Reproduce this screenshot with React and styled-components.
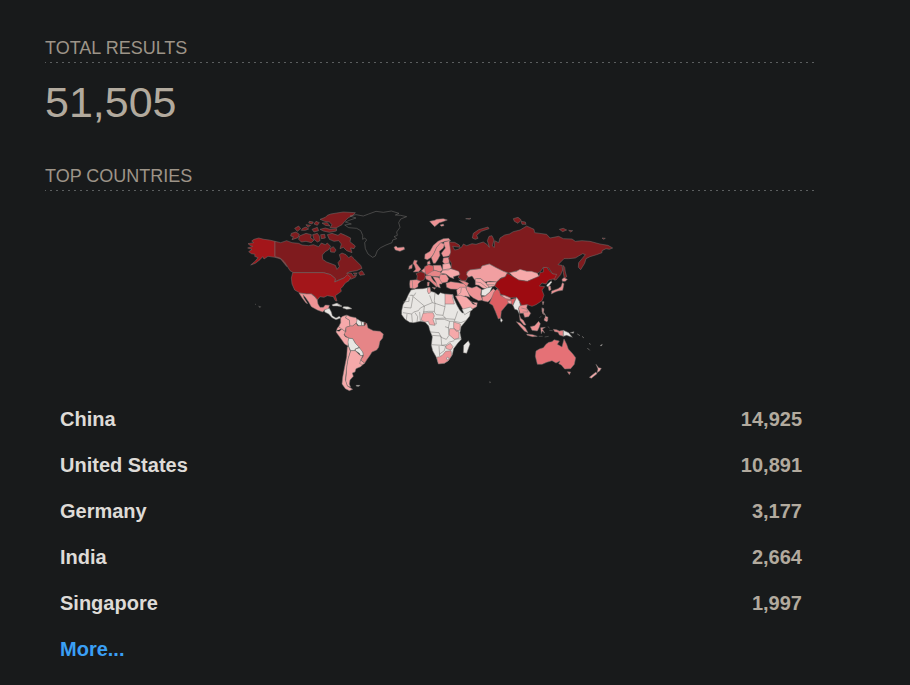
import React from 'react';
import styled, { createGlobalStyle } from 'styled-components';

const countries = [
    { name: 'China', total: '14,925' },
    { name: 'United States', total: '10,891' },
    { name: 'Germany', total: '3,177' },
    { name: 'India', total: '2,664' },
    { name: 'Singapore', total: '1,997' },
];

const none = '#e8e6e3';
const pale = '#f6a9aa';
const light = '#ee9395';
const mid = '#e68587';
const strong = '#dc5e62';
const dark = '#7f1b1e';

// every region has its own origin on the map, shapes are [fill, path]
const regions = [
    {
        name: 'north america',
        x: 0,
        y: 0,
        shapes: [
            ['#a3161a', 'M105 112L88 108 72 106 56 102 42 106 35 111 41 116 24 119 30 124 38 127 23 132 36 136 26 143 34 149 45 151 44 157 54 161 46 171 32 183 46 178 60 167 68 158 72 165 84 157 105 160 122 165 134 180 141 188 132 172 120 162 105 157Z'],
            [dark, 'M105 112L122 116 140 110 156 116 176 118 186 123 206 125 220 122 236 128 244 117 256 122 262 117 272 127 266 137 256 143 247 153 248 166 260 174 276 180 286 184 291 196 298 188 294 176 302 166 298 152 306 147 318 152 326 161 334 156 342 164 352 174 362 184 366 193 350 200 330 203 320 208 334 207 340 216 350 212 346 220 332 226 326 218 312 222 296 228 284 234 286 224 272 212 250 206 160 206 150 200 140 184 132 172 120 162 105 158Z'],
            [dark, 'M356 206L366 200 374 212 360 214Z M352 207L344 212 340 207Z'],
            ['#a3161a', 'M158 206L250 206 272 212 286 224 284 234 298 228 312 222 322 212 332 220 327 230 316 237 308 248 302 254 304 262 296 268 286 275 291 291 286 290 280 278 262 275 252 280 240 278 232 288 224 276 214 270 200 270 180 267 164 258 156 240 154 222Z'],
            [light, 'M177 267L200 270 214 270 224 278 232 288 234 300 240 310 250 310 256 303 268 304 265 316 254 318 248 324 232 318 214 308 206 294 196 280 189 272 192 282 203 299 198 297 186 281Z'],
            [dark, 'M240 46L256 40 262 34 272 30 290 27 310 24 346 26 340 33 324 42 314 52 306 62 288 72 270 71 276 62 268 54 254 52Z'],
            [dark, 'M240 76L256 72 270 76 290 74 289 81 268 85 250 81Z M246 57L262 56 270 66 256 64Z'],
            [dark, 'M178 96L198 88 214 92 212 102 222 108 214 116 198 112 184 114 176 106Z'],
            [dark, 'M154 88L168 84 178 91 174 101 156 107 160 98 152 96Z'],
            [dark, 'M164 73L176 66 182 74 172 82Z M188 73L198 69 206 75 196 79 184 79Z M208 52L220 54 216 60 206 57Z M198 62L212 64 204 70Z M216 76L232 70 236 80 222 84Z'],
            [dark, 'M218 92L232 88 238 96 240 110 232 114 222 106Z M242 92L254 91 256 102 244 104Z M228 52L238 56 232 64 222 60Z'],
            [dark, 'M262 92L276 88 294 94 302 88 316 94 332 102 330 113 346 126 342 134 332 132 336 146 320 140 310 130 300 134 304 120 296 110 282 112 268 106Z'],
            [dark, 'M270 134L280 128 288 138 284 145 272 144Z'],
            ['none', 'M45 300L48 302 M56 307L62 308 60 311Z'],
            [none, 'M279 302L292 298 306 306 290 305Z M312 308L328 310 334 314 318 315Z'],
        ],
    },
    {
        name: 'greenland and iceland',
        x: 270,
        y: 0,
        shapes: [
            ['none', 'M60 36L78 32 100 36 116 30 138 22 160 25 184 21 207 28 196 33 212 34 230 38 212 45 206 56 210 70 200 84 202 94 192 98 200 104 188 108 186 116 168 123 152 131 142 140 136 156 128 160 114 150 106 134 104 116 110 108 104 102 98 106 98 94 92 80 80 73 56 71 44 63 64 60 46 54 60 48 78 42Z'],
            [light, 'M192 130L198 126 203 131 222 129 224 136 210 142 196 138Z'],
        ],
    },
    {
        name: 'south america',
        x: 240,
        y: 288,
        shapes: [
            [none, 'M14 29L28 25 34 36 37 47 48 54 58 49 62 54 48 59 36 53 26 42 14 36Z'],
            [none, 'M36 14L50 10 66 20 52 18 38 18Z M70 20L84 20 96 26 80 28 68 24Z'],
            [pale, 'M62 54L68 49 80 45 77 54 88 60 90 78 78 82 76 95 62 86 56 80 62 68Z'],
            [pale, 'M80 45L92 50 108 53 113 62 108 70 98 78 90 78 88 60 77 54Z'],
            [none, 'M112 57L124 65 125 77 116 77 109 69Z M124 65L132 66 132 77 125 77Z'],
            [dark, 'M132 66L139 70 133 77Z'],
            [mid, 'M90 78L98 78 108 70 114 78 134 77 140 69 144 84 160 92 180 94 190 102 188 114 180 124 176 142 170 150 156 156 150 166 140 180 134 190 122 180 130 168 128 156 120 150 118 142 106 130 98 116 86 114 76 108 72 100 78 94 78 82Z'],
            [pale, 'M56 80L64 86 76 95 72 104 76 110 86 114 86 126 84 138 74 132 64 118 54 104 48 96 52 84Z M48 92L58 94 66 86'],
            [none, 'M86 115L98 116 106 130 118 142 106 147 104 152 92 152 86 140 84 126Z M106 147L118 143 128 156 130 165 122 168 118 160 106 152Z'],
            [pale, 'M92 152L106 152 120 166 128 168 122 180 128 194 122 200 108 206 105 216 97 219 100 229 90 240 88 252 92 262 82 258 77 244 79 220 80 200 84 176Z'],
            [pale, 'M86 140L91 154 84 176 80 200 78 220 76 240 82 258 98 268 88 272 76 266 66 252 68 232 74 200 80 170 82 140Z'],
            [pale, 'M122 180L134 190 128 194 119 191Z'],
            [none, 'M108 256L120 256 117 259 110 259Z'],
        ],
    },
    {
        name: 'africa',
        x: 465,
        y: 228,
        shapes: [
            [none, 'M48 30L62 27 84 26 104 22 106 34 118 37 130 45 136 38 150 42 174 44 176 54 186 76 194 90 202 99 226 94 224 108 210 126 198 140 195 158 199 178 188 190 176 206 172 224 160 242 148 250 130 250 124 232 113 212 109 196 112 170 104 150 101 138 90 126 76 124 56 128 44 127 30 118 20 104 20 92 24 74 34 58 40 44Z'],
            ['none', 'M44 46L58 46 62 38 M24 66L42 64 42 52 M50 46L88 78 76 84 70 92 56 96 50 102 24 98 M88 78L112 68 104 46 M112 68L120 70 M120 38L118 62 120 70 150 80 150 72 M88 78L86 100 M120 70L118 96 M150 80L144 106 152 116 180 118 188 94 M118 96L124 104 144 106 M118 116L152 114 M36 102L34 120 M50 102L52 126 M60 98L68 110 66 126 M74 96L76 124'],
            ['none', 'M108 132L124 132 122 118 M122 118L148 118 164 124 160 144 162 166 154 178 138 172 132 158 108 156 M110 166L138 168 140 196 110 194 M140 196L154 194 164 186 178 182 M132 198L134 228 M140 196L152 198 148 212 134 222 M164 124L178 124 180 118 M178 124L198 128 212 122 M168 166L178 178 198 176 M150 140L162 144 M26 82L48 84 54 50 M84 96L100 94 118 94'],
            [pale, 'M98 24L105 22 107 36 101 42 97 33Z M150 42L174 44 172 50 178 72 150 72Z M176 126L196 132 195 150 184 154 176 144Z M164 146L178 146 192 156 192 174 178 178 162 164Z'],
            [pale, 'M84 100L98 98 114 98 118 108 114 118 120 136 104 134 100 124 90 126 78 120Z M152 198L166 190 174 200 168 210 154 206Z'],
            [light, 'M125 232L134 230 142 226 152 214 168 212 170 226 160 242 148 250 130 252Z'],
            [none, 'M154 234L159 231 162 236 157 240Z M206 196L220 182 225 192 215 220 205 218Z'],
        ],
    },
    {
        name: 'europe',
        x: 450,
        y: 18,
        shapes: [
            [light, 'M119 34L134 31 140 28 160 26 172 30 156 36 148 38 134 50 126 42Z M150 45L160 42 162 47 154 49Z'],
            [light, 'M112 149L104 146 105 133 120 124 130 106 144 94 160 86 176 85 182 92 166 94 152 99 140 112 132 130 124 142Z'],
            [light, 'M124 143L132 130 140 112 152 98 164 102 160 114 148 124 150 136 144 148 136 160 130 160Z'],
            [light, 'M162 96L178 92 181 106 184 128 176 138 160 141 154 130 166 114 162 104Z'],
            [light, 'M112 156L119 152 121 162 112 164Z M160 144L176 142 178 158 166 164 158 156Z'],
            [mid, 'M73 150L82 152 79 160 86 169 93 178 86 185 70 186 77 178 74 168 69 160Z M58 168L67 163 66 175 56 178Z'],
            [dark, 'M78 191L92 185 104 189 106 200 102 210 90 214 80 208 82 198Z'],
            [strong, 'M104 170L116 164 130 168 131 180 126 192 108 194 103 182Z'],
            [light, 'M94 183L104 173 106 190Z M130 166L152 166 158 180 150 186 131 180Z'],
            [mid, 'M126 184L134 181 150 186 158 191 150 200 128 199 108 196Z'],
            [light, 'M60 211L80 209 92 214 84 222 84 230 74 236 60 234 59 222Z M67 212L68 234'],
            [mid, 'M106 198L122 196 125 204 131 213 144 223 140 232 130 222 120 213 108 207Z M112 217L118 216 117 228 112 228Z M126 232L137 233 134 238Z'],
            [light, 'M128 200L144 202 156 210 156 222 148 222 151 234 142 230 138 216Z'],
            [light, 'M150 194L168 193 176 206 172 216 156 219 148 206Z'],
            [pale, 'M158 163L178 159 184 172 176 180 158 180Z M158 180L180 176 194 178 208 184 210 194 190 200 192 206 180 202 168 192 152 190Z'],
            [light, 'M168 220L182 215 204 218 226 222 231 236 204 238 182 237 170 232Z'],
            [mid, 'M206 210L224 214 236 220 230 230 222 222Z'],
        ],
    },
    {
        name: 'asia',
        x: 630,
        y: 18,
        shapes: [
            [dark, 'M-2 96L14 97 28 105 30 112 8 109 14 120 24 118 36 110 40 102 50 107 66 101 78 103 90 99 100 96 112 104 118 112 112 92 117 79 126 77 132 90 127 108 133 112 134 92 146 98 150 84 164 75 178 72 190 65 210 60 230 48 252 58 254 68 276 71 290 73 300 84 326 79 340 86 366 87 376 94 396 92 420 94 450 102 474 106 488 114 478 118 468 116 456 122 456 128 440 134 420 140 408 146 404 160 392 179 385 172 386 158 396 146 406 134 398 131 386 138 376 144 356 146 342 146 324 164 336 166 338 180 332 194 318 210 312 210 310 202 318 194 308 192 296 174 280 172 272 184 262 190 240 186 222 182 200 182 178 190 160 184 140 174 118 162 96 168 92 176 60 180 50 186 54 200 48 212 36 212 24 202 30 192 26 184 4 176 4 160 -4 146 2 126Z'],
            [dark, 'M67 84L70 70 86 59 114 51 117 56 94 64 80 76 84 85 76 88Z M190 26L204 22 214 30 204 40 193 34Z M213 34L226 36 228 43 216 43Z M47 26L63 25 58 28Z'],
            [dark, 'M328 58L340 55 350 60 338 65Z M356 61L368 62 362 66Z M456 84L466 85 460 88Z M339 166L344 172 346 186 350 200 343 206 340 188Z'],
            ['#f19fa1', 'M52 186L60 180 92 176 96 168 118 162 140 174 160 184 172 188 166 200 152 204 140 216 120 214 104 216 92 206 80 206 76 212 66 198 56 202 50 194Z'],
            [pale, 'M76 206L92 206 104 216 118 228 112 238 98 234 86 226 76 224Z M78 216L92 218 112 234 M112 216L140 216 134 228 118 232 108 222Z M112 224L134 224'],
            [pale, 'M178 188L200 184 210 178 230 184 244 184 262 190 268 200 250 206 232 214 206 210 190 200Z'],
            ['#9d0b11', 'M172 190L190 200 206 210 232 214 250 206 268 198 270 188 280 186 280 173 290 172 298 182 308 192 320 193 314 206 296 210 288 222 276 219 268 228 284 230 276 240 282 256 276 272 258 284 246 289 232 284 216 288 206 270 196 262 182 264 162 256 150 252 146 238 134 228 140 216 152 206 166 200Z'],
            [none, 'M290 225L304 212 305 217 297 228 291 230Z'],
            [light, 'M294 229L301 228 303 239 297 242Z M336 208L342 203 352 208 346 214 337 214Z M337 218L342 221 340 232 338 241 324 243 314 247 304 252 305 243 324 236 333 230Z M277 275L282 275 279 285Z'],
            [pale, 'M20 240L30 232 46 232 54 246 60 262 46 258 34 262 22 256Z M34 234L32 248 22 256'],
            [pale, 'M16 258L32 256 50 262 64 276 82 278 80 290 62 300 42 304 32 286Z M62 274L68 282 78 284'],
            [none, 'M36 298L62 291 68 299 44 314Z'],
            [light, 'M48 228L66 234 80 229 94 238 92 254 98 270 86 272 70 264 58 254 50 240Z'],
            [none, 'M95 240L110 234 127 230 120 246 106 258 94 256Z'],
            [light, 'M96 260L106 258 120 246 130 236 138 244 130 258 122 268 114 276 98 272Z'],
            [strong, 'M132 246L142 236 148 244 152 256 170 266 184 268 198 264 192 278 188 286 182 278 174 280 164 292 154 304 152 324 145 327 136 304 128 286 118 280 124 266Z'],
            [pale, 'M152 256L162 256 182 264 180 268 168 266Z M172 272L184 272 184 282 176 280Z'],
            [none, 'M152 323L158 331 154 337 151 332Z M200 262L208 274 212 288 206 294 208 312 202 300 194 298 189 286Z'],
            [light, 'M208 288L216 286 232 284 230 294 242 310 236 320 224 322 220 310 210 310 206 296Z M214 294L230 298 234 306 218 306'],
            [light, 'M276 294L282 296 280 306 286 314 276 306Z M286 318L294 322 292 334 284 328Z'],
        ],
    },
    {
        name: 'oceania',
        x: 780,
        y: 273,
        shapes: [
            [light, 'M58 58L62 70 70 76 78 90 72 90 60 76Z M49 80L60 84 76 98 84 113 74 109 62 96Z M80 117L98 119 112 124 98 125 82 121Z'],
            [light, 'M91 95L104 92 116 79 121 86 117 98 112 108 96 106Z M122 98L136 97 127 102 134 114 127 108 124 116Z M116 124L128 124 M134 126L146 124 M144 94L148 100 M148 106L158 107'],
            [mid, 'M160 103L170 104 178 108 190 106 190 124 178 120 174 112 164 110Z'],
            [none, 'M190 106L206 113 217 127 200 121 190 124Z M211 113L222 110 220 115Z M268 144L271 149Z M262 159L269 166Z M300 152L307 148 305 152Z M232 117L240 122Z M246 124L252 129Z'],
            ['#e57176', 'M108 168L118 162 130 158 138 148 146 142 156 140 162 134 178 138 172 148 186 156 192 132 200 148 205 162 218 176 227 188 223 208 212 221 194 222 184 210 176 206 180 198 168 204 156 197 140 202 126 208 112 208 106 184Z'],
            [mid, 'M202 230L212 231 208 239Z'],
            [pale, 'M288 208L296 218 304 220 299 228 291 233 294 222Z M288 231L291 236 274 250 268 247Z'],
            [light, 'M126 38L131 46 129 54 138 62 128 56Z M134 70L144 74 140 80 132 76Z M118 68L124 64'],
            ['none', 'M-31 260L-28 262 -31 263Z'],
        ],
    },
];

const WorldMap = () => (
    <Map viewBox="3 0 1140 576" role="img" aria-label="World map">
        {regions.map(({ name, x, y, shapes }) => (
            <g key={name} transform={`translate(${x} ${y})`}>
                {shapes.map(([fill, d]) => <path key={d} fill={fill} d={d} />)}
            </g>
        ))}
    </Map>
);

const App = () => (
    <>
        <GlobalStyle />
        <Summary>
            <section>
                <Title>TOTAL RESULTS</Title>
                <Total>51,505</Total>
            </section>
            <section>
                <Title>TOP COUNTRIES</Title>
                <WorldMap />
                <Table>
                    <tbody>
                        {countries.map(({ name, total }) => (
                            <tr key={name}>
                                <Country scope="row">{name}</Country>
                                <Count>{total}</Count>
                            </tr>
                        ))}
                    </tbody>
                </Table>
                <More href="#more">More...</More>
            </section>
        </Summary>
    </>
);

const GlobalStyle = createGlobalStyle`
    * {
        box-sizing: border-box;
    }

    body {
        margin: 0;
        background-color: #181a1b;
        color: #b2aa9e;
        font-family: "Liberation Sans", Arial, sans-serif;
    }
`;

const Summary = styled.main`
    padding: 36px 93px 0 45px;
`;

const Title = styled.h2`
    margin: 0;
    padding-bottom: 3px;
    color: #9d9488;
    font-size: 18px;
    font-weight: 400;
    line-height: 24px;
    background: repeating-linear-gradient(90deg, #5b5e5f 0 2px, transparent 2px 6px) -1px 100% / 102% 1px no-repeat;
`;

const Total = styled.p`
    margin: 0;
    padding: 12px 0 35px;
    font-size: 43px;
    line-height: 54px;
`;

const Map = styled.svg`
    display: block;
    width: 100%;
    max-width: 380px;
    margin: 13px auto 0;

    path {
        stroke: #757371;
        stroke-width: 1.5;
        stroke-linejoin: round;
    }
`;

const Table = styled.table`
    width: 100%;
    border-collapse: collapse;
    font-size: 20px;
    font-weight: 700;
    line-height: 46px;
`;

const Country = styled.th`
    padding: 0 15px;
    color: #dedbd7;
    text-align: left;
`;

const Count = styled.td`
    padding: 0 15px;
    text-align: right;
`;

const More = styled.a`
    display: inline-block;
    padding: 0 15px;
    color: #3a9ff5;
    font-size: 20px;
    font-weight: 700;
    line-height: 46px;
    text-decoration: none;
`;

export default App;
